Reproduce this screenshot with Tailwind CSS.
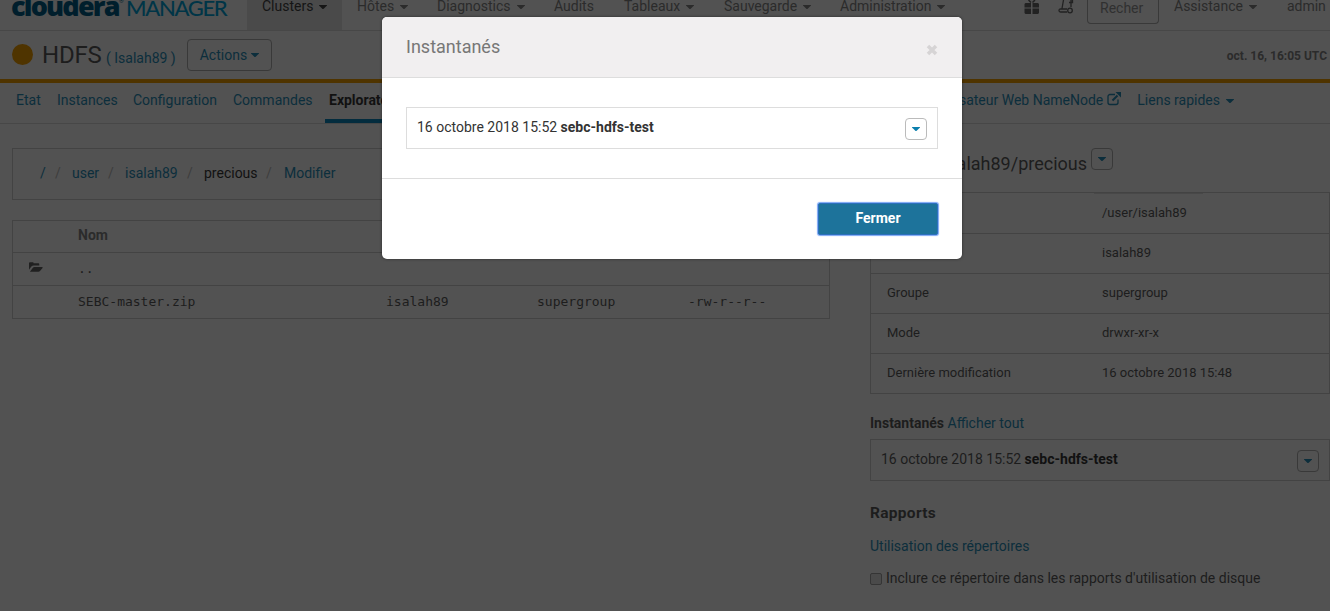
<!DOCTYPE html>
<html lang="fr">
<head>
<meta charset="utf-8">
<title>HDFS - Cloudera Manager</title>
<script src="https://cdn.jsdelivr.net/npm/@tailwindcss/browser@4"></script>
</head>
<body class="relative h-[611px] w-[1330px] overflow-hidden bg-[#525252] font-[Roboto,sans-serif] text-[14px] leading-5 text-[#1d1d1d]">
<svg class="hidden">
  <symbol id="caret" viewBox="0 0 8 4"><path d="M0 0h8v.4L4.400 4h-.8L0 .4z" fill="currentColor"/></symbol>
</svg>

<header class="flex h-[31px] items-start border-b border-[#474747] text-[#2b2b2b]">
  <div class="flex h-[30px] w-[247px] shrink-0 items-start pl-[11px]">
    <span class="-mt-[10px] w-[108px] font-['Open_Sans',sans-serif] text-[27px] leading-8 font-extrabold tracking-[-1.8px] text-[#001e2c]">cloudera</span>
    <span class="-mt-[2px] w-[7px] text-[6px] leading-[6px] text-[#001e2c]">®</span>
    <span class="-mt-[8px] font-[Lato,sans-serif] text-[22px] leading-8 font-medium tracking-[-1.3px] text-[#003547]">MANAGER</span>
  </div>
  <nav class="flex h-[30px] leading-5 [&>a]:-mt-px [&>a]:flex [&>a]:shrink-0 [&>a]:items-start [&_span]:-mt-[3px] [&_svg]:mt-[6px] [&_svg]:ml-[6px] [&_svg]:h-1 [&_svg]:w-2">
    <a class="h-[31px] w-[95px] bg-[#4a4a4a] pl-[15px] text-[#151515]"><span>Clusters</span><svg><use href="#caret"/></svg></a>
    <a class="w-[80px] pl-[15px]"><span>Hôtes</span><svg><use href="#caret"/></svg></a>
    <a class="w-[117px] pl-[15px]"><span>Diagnostics</span><svg><use href="#caret"/></svg></a>
    <a class="w-[70px] pl-[15px]"><span>Audits</span></a>
    <a class="w-[100px] pl-[15px]"><span>Tableaux</span><svg><use href="#caret"/></svg></a>
    <a class="w-[116px] pl-[15px]"><span>Sauvegarde</span><svg><use href="#caret"/></svg></a>
    <a class="w-[199px] pl-[15px]"><span>Administration</span><svg><use href="#caret"/></svg></a>
  </nav>
  <svg class="h-[14px] w-[16px] shrink-0" viewBox="0 0 16 14" fill="#222"><path d="M1.500 3H7v4.500H.5V4zM8.500 3h5.500l1 1v3.500H8.500zM.5 8.500H7V14H1.500l-1-1zM8.500 8.500H15V13l-1 1H8.500z"/><path d="M4.500 0L7 2.500M11 0L8.500 2.500" stroke="#222" stroke-width="1.500"/></svg>
  <svg class="ml-[18px] h-[14px] w-[17px] shrink-0" viewBox="0 0 17 14" fill="none" stroke="#222" stroke-width="1.300"><path d="M5.500 0L4 8.500M13 0v7M11 2.500h3.500V0M9 9H2.500q-1.500 0-1.500 1.500T2.500 12H9"/><circle cx="12" cy="10.500" r="2.300"/></svg>
  <div class="ml-[12px] h-[24px] w-[72px] shrink-0 rounded-b-[4px] border border-t-0 border-[#393939] pl-3 leading-[17px] text-[#303030]">Recher</div>
  <div class="-mt-[4px] ml-[15px] flex shrink-0">Assistance<svg class="mt-[9px] ml-[6px] h-1 w-2"><use href="#caret"/></svg></div>
  <span class="-mt-[4px] ml-[30px]">admin</span>
</header>

<section class="flex h-[52px] items-start border-b-4 border-[#4f3400] pt-[8px] pl-[12px]">
  <div class="mt-[5px] size-[21px] rounded-full bg-[#4f3400]"></div>
  <h1 class="ml-[9px] w-[60px] text-[24px] leading-8 tracking-[-0.2px]">HDFS</h1>
  <span class="mt-[9px] ml-[4px] text-[#0c2e3c]">( Isalah89 )</span>
  <button class="ml-[11px] flex h-[32px] w-[85px] items-start rounded-[4px] border border-[#393939] pt-[5px] pl-3 text-[#0c2e3c]">Actions<svg class="mt-[8px] ml-[4px] h-1 w-2"><use href="#caret"/></svg></button>
  <span class="mt-[7px] mr-[3px] ml-auto text-[12px] font-bold text-[#2b2b2b]">oct. 16, 16:05 UTC</span>
</section>

<nav class="flex h-[41px] items-start border-b border-[#474747] pt-[7px] pl-[16px] text-[#0c2e3c]">
  <a class="w-[41px]">Etat</a>
  <a class="w-[76px]">Instances</a>
  <a class="w-[100px]">Configuration</a>
  <a class="w-[92px]">Commandes</a>
  <a class="h-[33px] w-[160px] border-b-4 border-[#032c3e] pl-1 font-bold text-[#111]">Explorateur de fichiers</a>
  <a class="ml-auto">Interface utilisateur Web NameNode</a>
  <svg class="mt-[2px] ml-[4px] h-[14px] w-[14px]" viewBox="0 0 14 14" fill="none" stroke="currentColor"><path d="M8 2.500H3A2 2 0 0 0 1 4.500v6a2 2 0 0 0 2 2h6a2 2 0 0 0 2-2V7.500" stroke-width="1.300"/><path d="M5.500 8.500l5-5" stroke-width="2"/><path d="M8.500 0H14v5.500z" fill="currentColor" stroke="none"/></svg>
  <a class="mr-[96px] ml-[16px] flex">Liens rapides<svg class="mt-[9px] ml-[6px] h-1 w-2"><use href="#caret"/></svg></a>
</nav>

<main class="flex pl-[12px]">
  <div class="w-[818px] shrink-0 pt-[24px]">
    <div class="flex h-[52px] border border-[#434343] pt-[14px] pl-[27px] text-[#0c2e3c] [&>i]:text-[#3d3d3d] [&>i]:not-italic">
      <span class="w-[15px]">/</span><i class="w-[17px]">/</i><span class="w-[36px]">user</span><i class="w-[17px]">/</i><span class="w-[62px]">isalah89</span><i class="w-[17px]">/</i><span class="w-[62px] text-[#111]">precious</span><i class="w-[18px]">/</i><span>Modifier</span>
    </div>
    <div class="mt-[20px] h-[99px] border border-[#434343]">
      <div class="h-[31px] pt-[4px] pl-[65px] font-bold text-[#2b2b2b]">Nom</div>
      <div class="flex h-[33px] border-t border-[#434343] pl-[16px] text-[13px]"><svg class="mt-[8px] h-[12px] w-[14px]" viewBox="0 0 15 12" fill="#202020"><path d="M0 9V2q0-1 1-1h3q1 0 1 1h5q1 0 1 1v1.500H5q-1.500 0-2.500 1zM1 11l3-4q.7-1 2-1h8q1 0 .5 1l-2.500 3q-.8 1-2 1z"/></svg><span class="mt-[6px] ml-[35px] font-['DejaVu_Sans_Mono',monospace]">..</span></div>
      <div class="flex h-[33px] border-t border-[#434343] pt-[6px] pl-[65px] font-['DejaVu_Sans_Mono',monospace] text-[13px]"><span class="w-[308px]">SEBC-master.zip</span><span class="w-[151px]">isalah89</span><span class="w-[151px]">supergroup</span><span>-rw-r--r--</span></div>
    </div>
  </div>
  <aside class="ml-[40px] w-[460px] shrink-0 pt-[24px]">
    <div class="flex h-[44px]"><h2 class="mt-[4px] w-[217px] text-right text-[18px] leading-6">/user/isalah89/precious</h2><button class="ml-[4px] grid size-[22px] place-items-center rounded-[4px] border border-[#393939] text-[#0c2e3c]"><svg class="h-1 w-2"><use href="#caret"/></svg></button></div>
    <dl class="relative border border-[#434343] text-[13px] before:absolute before:top-0 before:left-[223px] before:h-px before:w-[109px] before:bg-[#484848] [&>div]:flex [&>div]:h-[40px] [&>div]:border-t [&>div]:border-[#434343] [&>div]:pt-[9px] [&>div]:pl-4 [&_dt]:w-[215px]">
      <div class="border-t-0! pt-[10px]!"><dt>Parent</dt><dd>/user/isalah89</dd></div>
      <div><dt><span class="invisible">Nom</span></dt><dd>isalah89</dd></div>
      <div><dt>Groupe</dt><dd>supergroup</dd></div>
      <div><dt>Mode</dt><dd>drwxr-xr-x</dd></div>
      <div><dt>Dernière modification</dt><dd>16 octobre 2018 15:48</dd></div>
    </dl>
    <p class="mt-[19px]"><b>Instantanés</b> <a class="text-[#0c2e3c]">Afficher tout</a></p>
    <div class="mt-[6px] flex h-[42px] justify-between border border-[#434343] pt-[9px] pr-[10px] pl-[10px]"><p>16 octobre 2018 15:52 <b class="text-[#111]">sebc-hdfs-test</b></p><button class="mt-px grid size-[22px] place-items-center rounded-[4px] border border-[#393939] text-[#0c2e3c]"><svg class="h-1 w-2"><use href="#caret"/></svg></button></div>
    <h3 class="mt-[22px] text-[15.500px] leading-5 font-bold tracking-[0.3px]">Rapports</h3>
    <a class="mt-[13px] block text-[#0c2e3c]">Utilisation des répertoires</a>
    <label class="mt-[12px] flex"><span class="mt-[5px] mr-[4px] size-[12px] rounded-[2px] border border-[#353535] bg-[#4a4a4a]"></span>Inclure ce répertoire dans les rapports d'utilisation de disque</label>
  </aside>
</main>

<div class="absolute top-[17px] left-[382px] h-[242px] w-[580px] overflow-hidden rounded-[5px] bg-white text-[#333] shadow-[0_0_3px_rgba(0,0,0,.5)]" role="dialog">
  <div class="flex h-[61px] items-start justify-between border-b border-[#ddd] bg-[#f1eff0] pt-[19px] pr-[24px] pl-[24px] text-[18px] leading-[22px] text-[#777]">Instantanés<svg class="mt-[8px] size-[12px]" viewBox="0 0 12 12"><path d="M2 2l8 8M10 2L2 10" stroke="#d6d4d5" stroke-width="3.500"/></svg></div>
  <div class="h-[100px] px-6 pt-[29px]">
    <div class="flex h-[42px] justify-between border border-[#ddd] px-[10px] pt-[9px]"><p>16 octobre 2018 15:52 <b>sebc-hdfs-test</b></p><button class="mt-px grid size-[22px] place-items-center rounded-[4px] border border-[#bbb] text-[#0b7fad]"><svg class="h-1 w-2"><use href="#caret"/></svg></button></div>
  </div>
  <div class="flex h-[81px] justify-end border-t border-[#ddd] pt-[24px] pr-[24px]"><button class="h-[32px] w-[120px] rounded-[2px] border border-[#2d70bd] bg-[#1d739b] pb-px leading-[29px] font-bold text-white shadow-[0_0_1px_1px_#7aa7f5]">Fermer</button></div>
</div>
</body>
</html>
